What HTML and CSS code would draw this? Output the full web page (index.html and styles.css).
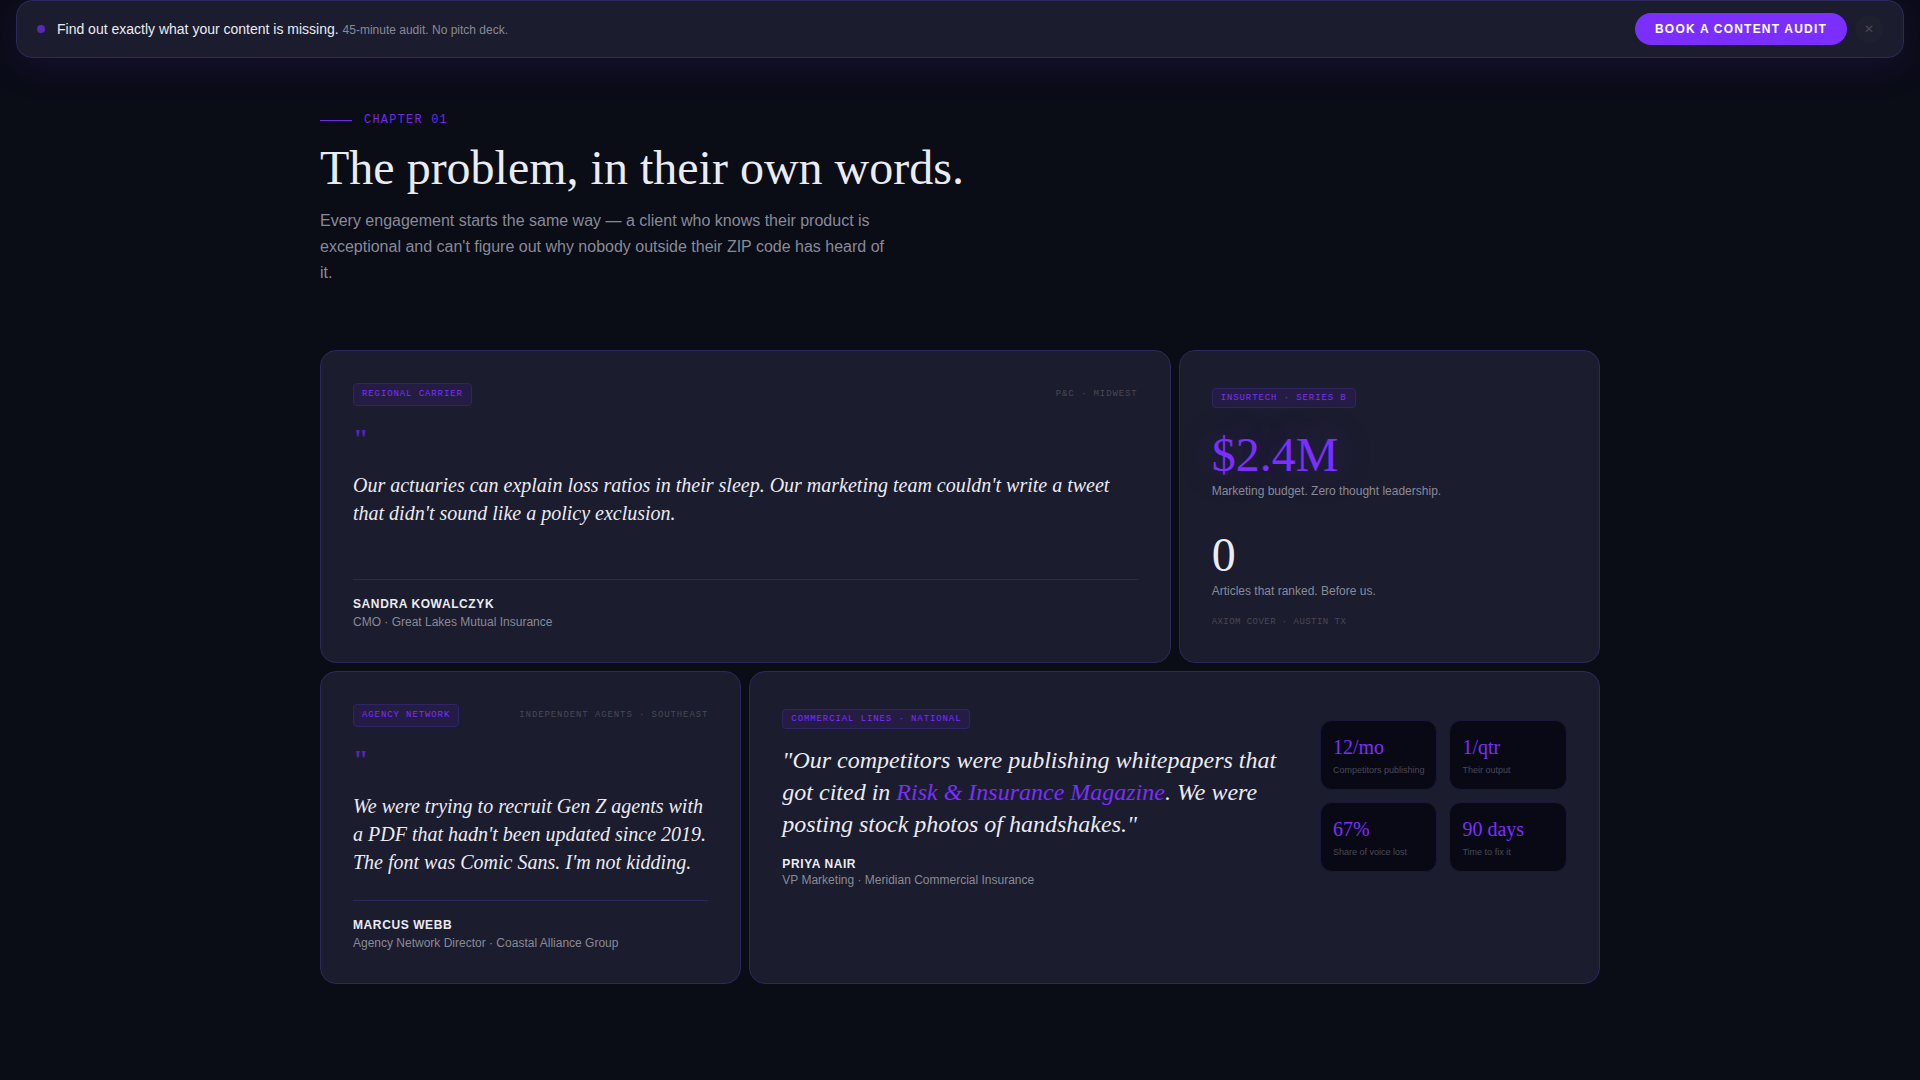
FILE: index.html
```html
<!DOCTYPE html>
<html lang="en">
<head>
<meta charset="utf-8">
<meta name="viewport" content="width=device-width, initial-scale=1">
<title>Chapter 01 — The problem, in their own words</title>
<link rel="stylesheet" href="styles.css">
</head>
<body>
<aside class="banner">
  <span class="banner-dot"></span>
  <p class="banner-text">Find out exactly what your content is missing. <span class="banner-note">45-minute audit. No pitch deck.</span></p>
  <div class="banner-actions">
    <button class="banner-cta" type="button">Book a content audit</button>
    <button class="banner-close" type="button" aria-label="Dismiss">✕</button>
  </div>
</aside>

<main class="section">
  <header class="intro">
    <div class="chapter">Chapter 01</div>
    <h1 class="title">The problem, in their own words.</h1>
    <p class="lead">Every engagement starts the same way — a client who knows their product is exceptional and can't figure out why nobody outside their ZIP code has heard of it.</p>
  </header>

  <div class="bento">
    <article class="card card-wide">
      <div class="card-head">
        <span class="tag">Regional carrier</span>
        <span class="meta">P&amp;C · Midwest</span>
      </div>
      <div class="mark" aria-hidden="true">"</div>
      <blockquote class="quote">Our actuaries can explain loss ratios in their sleep. Our marketing team couldn't write a tweet that didn't sound like a policy exclusion.</blockquote>
      <footer class="byline">
        <div class="name">Sandra Kowalczyk</div>
        <div class="role">CMO · Great Lakes Mutual Insurance</div>
      </footer>
    </article>

    <article class="card">
      <div class="tag-line"><span class="tag">Insurtech · Series B</span></div>
      <div class="figure">
        <div class="figure-value figure-glow">$2.4M</div>
        <div class="figure-label">Marketing budget. Zero thought leadership.</div>
      </div>
      <div class="figure figure-next">
        <div class="figure-value">0</div>
        <div class="figure-label">Articles that ranked. Before us.</div>
      </div>
      <div class="meta meta-foot">Axiom Cover · Austin TX</div>
    </article>

    <article class="card">
      <div class="card-head">
        <span class="tag">Agency network</span>
        <span class="meta">Independent agents · Southeast</span>
      </div>
      <div class="mark" aria-hidden="true">"</div>
      <blockquote class="quote">We were trying to recruit Gen Z agents with a PDF that hadn't been updated since 2019. The font was Comic Sans. I'm not kidding.</blockquote>
      <footer class="byline">
        <div class="name">Marcus Webb</div>
        <div class="role">Agency Network Director · Coastal Alliance Group</div>
      </footer>
    </article>

    <article class="card card-wide">
      <div class="feature">
        <div class="feature-body">
          <div class="tag-line"><span class="tag">Commercial lines · National</span></div>
          <blockquote class="quote quote-large">"Our competitors were publishing whitepapers that got cited in <em class="highlight">Risk &amp; Insurance Magazine</em>. We were posting stock photos of handshakes."</blockquote>
          <div class="name">Priya Nair</div>
          <div class="role role-tight">VP Marketing · Meridian Commercial Insurance</div>
        </div>
        <div class="stats">
          <div class="stat"><div class="stat-value">12/mo</div><div class="stat-label">Competitors publishing</div></div>
          <div class="stat"><div class="stat-value">1/qtr</div><div class="stat-label">Their output</div></div>
          <div class="stat"><div class="stat-value">67%</div><div class="stat-label">Share of voice lost</div></div>
          <div class="stat"><div class="stat-value">90 days</div><div class="stat-label">Time to fix it</div></div>
        </div>
      </div>
    </article>
  </div>
</main>
</body>
</html>
```
FILE: styles.css
```css
:root {
  --bg: #0a0c16;
  --surface: #1b1c2d;
  --line: #2d285c;
  --accent: #7b2fff;
  --text: #ebebf2;
  --muted: #888a98;
  --dim: #484956;
  --sans: "Liberation Sans", Arial, sans-serif;
  --serif: "Liberation Serif", "Times New Roman", serif;
  --mono: "Liberation Mono", "Courier New", monospace;
}

* { box-sizing: border-box; margin: 0; padding: 0; }

body {
  min-height: 100vh;
  background: var(--bg);
  color: var(--text);
  font-family: var(--sans);
  font-size: 16px;
  line-height: 24px;
}

/* Banner */
.banner {
  display: flex;
  align-items: center;
  gap: 12px;
  margin: 0 16px;
  padding: 12px 20px;
  background: var(--surface);
  border: 1px solid var(--line);
  border-radius: 16px;
  box-shadow: 0 8px 40px rgba(123, 47, 255, 0.12);
}
.banner-dot {
  width: 8px;
  height: 8px;
  border-radius: 50%;
  background: var(--accent);
  opacity: 0.65;
}
.banner-text { flex: 1; font-size: 14px; }
.banner-note { color: var(--muted); font-size: 12px; }
.banner-actions {
  display: flex;
  align-items: center;
  gap: 8px;
}
.banner-cta {
  height: 32px;
  padding: 0 20px;
  border: 0;
  border-radius: 16px;
  background: var(--accent);
  color: #fff;
  font: bold 12px/16px var(--sans);
  letter-spacing: 0.1em;
  text-transform: uppercase;
}
.banner-close {
  width: 28px;
  height: 28px;
  border: 0;
  border-radius: 50%;
  background: #1e1f2f;
  color: var(--dim);
  font: 12px/28px var(--sans);
}

/* Section heading */
.section {
  max-width: 1328px;
  margin: 0 auto;
  padding: 50px 24px 96px;
}
.intro { margin-bottom: 64px; }
.chapter {
  display: flex;
  align-items: center;
  gap: 12px;
  margin-bottom: 8px;
  color: var(--accent);
  font-family: var(--mono);
  font-size: 12px;
  letter-spacing: 0.1em;
  text-transform: uppercase;
  opacity: 0.9;
}
.chapter::before {
  content: "";
  width: 32px;
  height: 1px;
  background: var(--accent);
}
.title {
  margin-bottom: 12px;
  font-family: var(--serif);
  font-size: 48px;
  font-weight: 400;
  line-height: 56px;
}
.lead {
  max-width: 576px;
  color: var(--muted);
  line-height: 26px;
}

/* Card grid */
.bento {
  display: grid;
  grid-template-columns: repeat(3, minmax(0, 1fr));
  grid-auto-rows: 1fr;
  gap: 8px;
}
.card {
  display: flex;
  flex-direction: column;
  padding: 32px;
  background: var(--surface);
  border: 1px solid var(--line);
  border-radius: 16px;
}
.card-wide { grid-column: span 2; }
.card-head {
  display: flex;
  align-items: flex-start;
  justify-content: space-between;
  min-height: 24px;
  margin-bottom: 16px;
}
.tag, .meta {
  font-family: var(--mono);
  font-size: 9px;
  line-height: 13px;
  letter-spacing: 0.1em;
  text-transform: uppercase;
}
.tag {
  padding: 4px 8px;
  border: 1px solid #2f2466;
  border-radius: 4px;
  background: #251c43;
  color: var(--accent);
}
.meta { padding-top: 4px; line-height: 14px; color: var(--dim); }
.meta-foot {
  margin-top: 16px;
  padding-top: 0;
  letter-spacing: 0.05em;
}
.mark {
  margin-bottom: 16px;
  color: var(--accent);
  font-family: var(--serif);
  font-size: 28px;
  font-weight: 700;
  line-height: 32px;
  opacity: 0.6;
}
.quote {
  margin-bottom: 24px;
  font-family: var(--serif);
  font-size: 20px;
  font-style: italic;
  line-height: 28px;
}
.quote-large {
  margin: 16px 0;
  font-size: 24px;
  line-height: 32px;
}
.highlight { color: var(--accent); }
.byline {
  margin-top: auto;
  padding-top: 16px;
  border-top: 1px solid var(--line);
}
.name, .role, .figure-label {
  font-size: 12px;
  line-height: 16px;
}
.name {
  font-weight: 700;
  letter-spacing: 0.05em;
  text-transform: uppercase;
}
.role { margin-top: 2px; color: var(--muted); }
.role-tight { margin-top: 0; }

/* Figures */
.figure { margin-top: 24px; }
.figure-next { margin-top: 32px; }
.figure-value {
  font-family: var(--serif);
  font-size: 48px;
  line-height: 48px;
}
.figure-glow {
  color: var(--accent);
  text-shadow: 0 0 40px rgba(123, 47, 255, 0.3);
}
.figure-label { margin-top: 4px; color: var(--muted); }

/* Feature card */
.feature {
  display: grid;
  grid-template-columns: minmax(0, 1fr) auto;
  align-items: center;
  gap: 32px;
}
.stats {
  display: grid;
  grid-template-columns: 1fr 1fr;
  gap: 12px;
}
.stat {
  padding: 12px;
  border: 1px solid #1a1838;
  border-radius: 12px;
  background: #080914;
}
.stat-value {
  margin-bottom: 2px;
  color: var(--accent);
  font-family: var(--serif);
  font-size: 20px;
  line-height: 28px;
}
.stat-label {
  color: var(--dim);
  font-size: 9px;
  line-height: 14px;
}

@media (max-width: 900px) {
  .bento, .feature { grid-template-columns: minmax(0, 1fr); }
  .card-wide { grid-column: auto; }
}
```
